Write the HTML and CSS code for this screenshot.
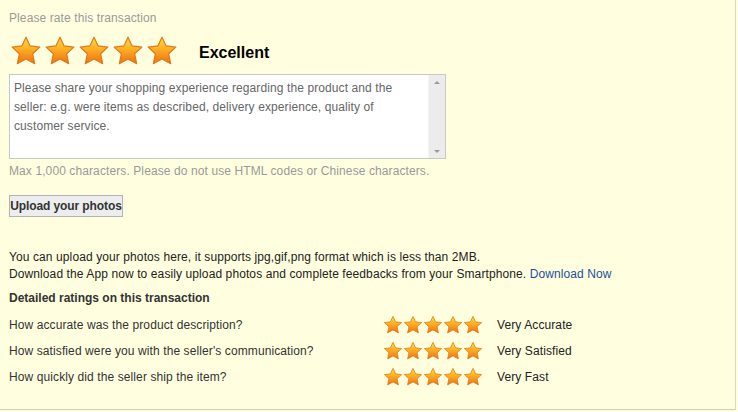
FILE: index.html
```html
<!DOCTYPE html>
<html>
<head>
<meta charset="utf-8">
<link rel="stylesheet" href="styles.css">
</head>
<body>
<svg width="0" height="0" class="defs">
  <defs>
    <linearGradient id="sg" x1="0" y1="0" x2="0" y2="1">
      <stop offset="0" stop-color="#ffdc45"/>
      <stop offset="0.45" stop-color="#fbb024"/>
      <stop offset="1" stop-color="#ee6e12"/>
    </linearGradient>
    <symbol id="star" viewBox="0 0 24 24">
      <path d="M12 1.6 L15.1 8.2 L22.4 9.1 L17 14.1 L18.5 21.5 L12 17.9 L5.5 21.5 L7 14.1 L1.6 9.1 L8.9 8.2 Z" fill="url(#sg)" stroke="#e07a1c" stroke-width="0.9" stroke-linejoin="round"/>
    </symbol>
  </defs>
</svg>
<div class="panel">
  <div class="title">Please rate this transaction</div>
  <div class="main-rating">
    <div class="stars big">
      <svg><use href="#star"/></svg><svg><use href="#star"/></svg><svg><use href="#star"/></svg><svg><use href="#star"/></svg><svg><use href="#star"/></svg>
    </div>
    <span class="verdict">Excellent</span>
  </div>
  <div class="textbox">
    <textarea placeholder="Please share your shopping experience regarding the product and the seller: e.g. were items as described, delivery experience, quality of customer service."></textarea>
    <div class="scrollbar"><span class="arrow up"></span><span class="arrow down"></span></div>
  </div>
  <div class="hint">Max 1,000 characters. Please do not use HTML codes or Chinese characters.</div>
  <div class="btn-row"><button class="upload">Upload your photos</button></div>
  <div class="info">
    <div>You can upload your photos here, it supports jpg,gif,png format which is less than 2MB.</div>
    <div>Download the App now to easily upload photos and complete feedbacks from your Smartphone. <a href="#" class="link">Download Now</a></div>
  </div>
  <div class="detail-title">Detailed ratings on this transaction</div>
  <div class="rows">
    <div class="row">
      <span class="q">How accurate was the product description?</span>
      <span class="stars small"><svg><use href="#star"/></svg><svg><use href="#star"/></svg><svg><use href="#star"/></svg><svg><use href="#star"/></svg><svg><use href="#star"/></svg></span>
      <span class="a">Very Accurate</span>
    </div>
    <div class="row">
      <span class="q">How satisfied were you with the seller's communication?</span>
      <span class="stars small"><svg><use href="#star"/></svg><svg><use href="#star"/></svg><svg><use href="#star"/></svg><svg><use href="#star"/></svg><svg><use href="#star"/></svg></span>
      <span class="a">Very Satisfied</span>
    </div>
    <div class="row">
      <span class="q">How quickly did the seller ship the item?</span>
      <span class="stars small"><svg><use href="#star"/></svg><svg><use href="#star"/></svg><svg><use href="#star"/></svg><svg><use href="#star"/></svg><svg><use href="#star"/></svg></span>
      <span class="a">Very Fast</span>
    </div>
  </div>
</div>
</body>
</html>
```

FILE: styles.css
```css
html, body {
  margin: 0;
  padding: 0;
  background: #fefee2;
}
.defs {
  position: absolute;
  width: 0;
  height: 0;
}
.panel {
  box-sizing: border-box;
  width: 736px;
  height: 410px;
  padding: 10px 0 0 9px;
  border-right: 1px solid #d8d8c4;
  border-bottom: 1px solid #cfcfc0;
  background: #ffffdf;
  font-family: "Liberation Sans", Arial, sans-serif;
  font-size: 12px;
  letter-spacing: 0.1px;
  color: #333;
  display: flex;
  flex-direction: column;
}
.title {
  line-height: 16px;
  color: #9a9a9a;
}
.main-rating {
  margin-top: 8px;
  height: 34px;
  display: flex;
  align-items: center;
}
.stars {
  display: flex;
}
.stars.big {
  gap: 2px;
  padding-left: 1px;
}
.stars.big svg {
  width: 32px;
  height: 32px;
}
.verdict {
  margin-left: 21px;
  padding-top: 4px;
  font-size: 16px;
  font-weight: bold;
  letter-spacing: 0;
  color: #000;
}
.textbox {
  margin-top: 6px;
  box-sizing: border-box;
  width: 437px;
  height: 85px;
  border: 1px solid #c8c8c8;
  background: #fff;
  display: flex;
}
.textbox textarea {
  flex: 1;
  border: none;
  outline: none;
  resize: none;
  margin: 0;
  padding: 4px 16px 0 4px;
  font-family: "Liberation Sans", Arial, sans-serif;
  font-size: 12px;
  letter-spacing: 0.1px;
  line-height: 19px;
  color: #666;
  background: #fff;
  overflow: hidden;
}
.textbox textarea::placeholder {
  color: #666;
  opacity: 1;
}
.scrollbar {
  width: 17px;
  background: #ececec;
  border-left: 1px solid #f4f4f4;
  display: flex;
  flex-direction: column;
  justify-content: space-between;
  align-items: center;
  padding: 6px 0 5px;
  box-sizing: border-box;
}
.arrow {
  width: 0;
  height: 0;
  border-left: 3px solid transparent;
  border-right: 3px solid transparent;
}
.arrow.up {
  border-bottom: 3px solid #9a9a9a;
}
.arrow.down {
  border-top: 3px solid #9a9a9a;
}
.hint {
  margin-top: 4px;
  line-height: 16px;
  color: #9a9a9a;
}
.btn-row {
  margin-top: 16px;
  display: flex;
}
.upload {
  box-sizing: border-box;
  width: 114px;
  height: 22px;
  padding: 0;
  white-space: nowrap;
  border: 1px solid #b4b4b4;
  background: #ededed;
  font-family: "Liberation Sans", Arial, sans-serif;
  font-size: 12px;
  font-weight: bold;
  letter-spacing: -0.1px;
  color: #333;
  text-align: center;
}
.info {
  margin-top: 32px;
  line-height: 17px;
  color: #222;
}
.link {
  color: #1f4f9c;
  text-decoration: none;
}
.detail-title {
  margin-top: 7px;
  line-height: 16px;
  font-weight: bold;
  letter-spacing: 0;
  color: #333;
}
.rows {
  margin-top: 6px;
  display: flex;
  flex-direction: column;
}
.row {
  height: 26px;
  display: flex;
  align-items: center;
  color: #333;
}
.q {
  width: 374px;
}
.stars.small svg {
  width: 20px;
  height: 20px;
}
.a {
  margin-left: 14px;
  color: #222;
}
```
